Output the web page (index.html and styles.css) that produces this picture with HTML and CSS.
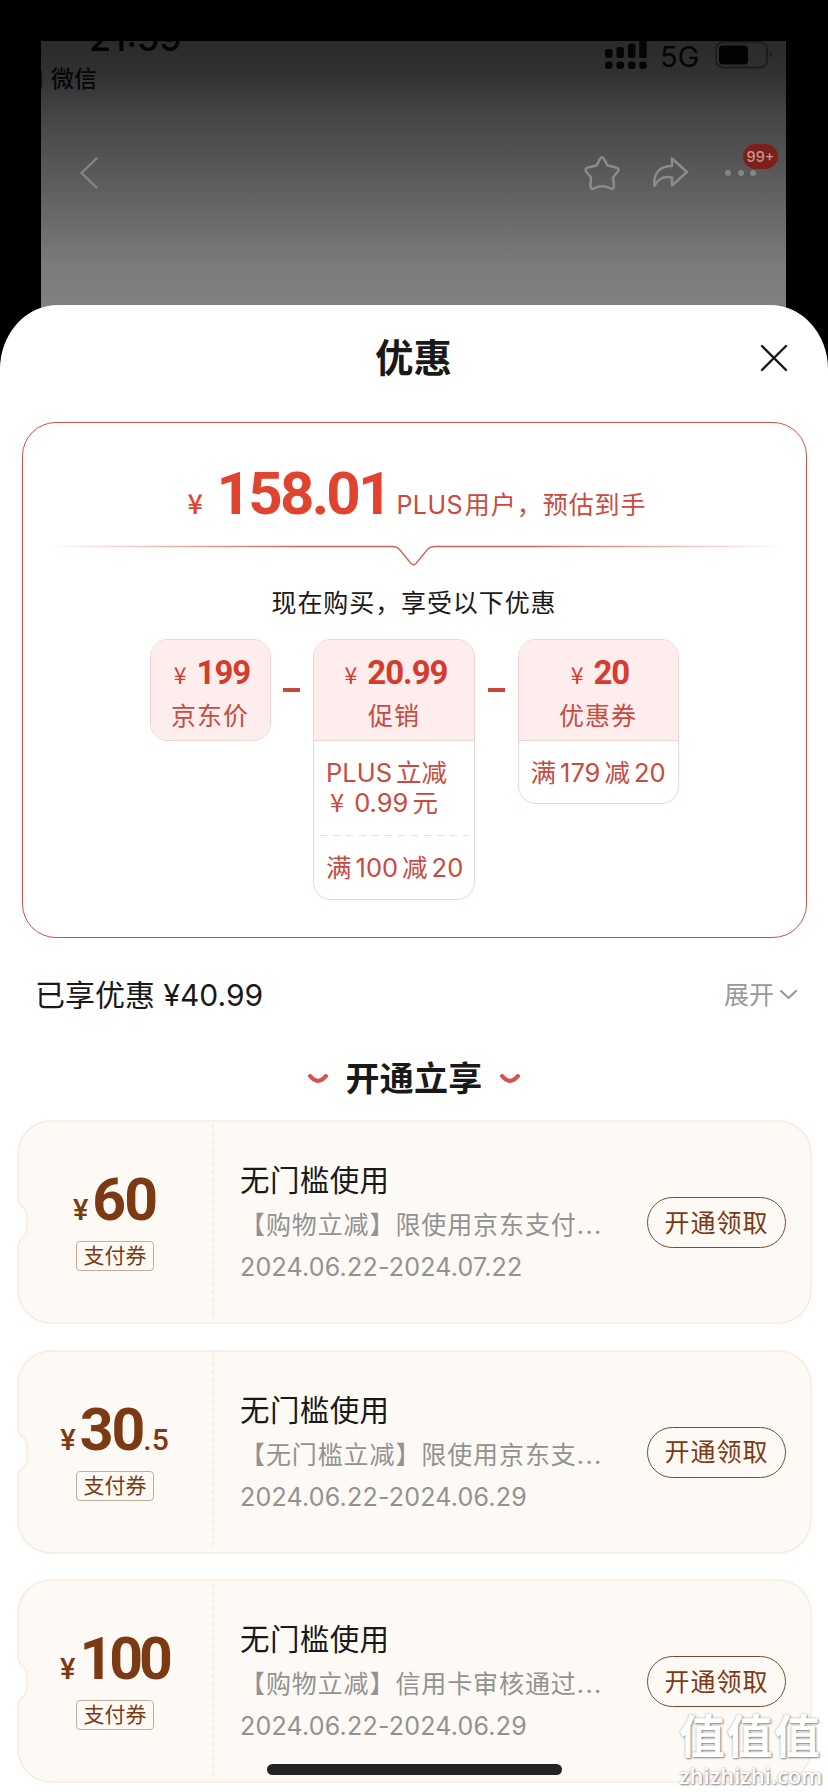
FILE: index.html
```html
<!DOCTYPE html>
<html lang="zh-CN">
<head>
<meta charset="utf-8">
<title>优惠</title>
<link rel="stylesheet" href="styles.css">
</head>
<body>
<svg class="defs" width="0" height="0" aria-hidden="true">
  <defs>
    <symbol id="ticket" viewBox="0 0 795 204">
      <path d="M34 1H761A33 33 0 0 1 794 34V170A33 33 0 0 1 761 203H34A33 33 0 0 1 1 170V126C1 117 10 120 10 108V97C10 85 1 88 1 79V34A33 33 0 0 1 34 1Z" fill="#fdfaf5" stroke="#f8ebe0" stroke-width="1.6"/>
      <path d="M196 5V200" stroke="#faecd6" stroke-width="1.6" stroke-dasharray="4 3.5"/>
    </symbol>
    <symbol id="smile" viewBox="0 0 20 10">
      <path d="M2.2 2.2Q10 11.500 17.800 2.200" fill="none" stroke="#d9504d" stroke-width="4.200" stroke-linecap="round"/>
    </symbol>
  </defs>
</svg>
<div class="phone">
  <header class="backdrop">
    <div class="screen">
      <div class="status">
        <span class="clock">21:59</span>
        <svg class="signal" width="42" height="28" viewBox="0 0 42 28">
          <g fill="#050505">
            <rect x="0" y="8" width="7.5" height="9" rx="2.5"/><rect x="11.5" y="6" width="7.5" height="11" rx="2.5"/><rect x="23" y="2.5" width="7.5" height="14.5" rx="2.5"/><rect x="34.200" y="-3" width="7.500" height="20" rx="1.500"/>
            <rect x="0" y="20.500" width="7.500" height="7.500" rx="3"/><rect x="11.500" y="20.500" width="7.500" height="7.500" rx="3"/><rect x="23" y="20.500" width="7.500" height="7.500" rx="3"/><rect x="34.200" y="20.500" width="7.500" height="7.500" rx="3"/>
          </g>
        </svg>
        <span class="net">5G</span>
        <svg class="battery" width="60" height="30" viewBox="0 0 60 30">
          <rect x="1" y="1" width="51" height="25.500" rx="7" fill="none" stroke="#1c1c1c" stroke-width="1.800"/>
          <rect x="4" y="4.500" width="29" height="19" rx="4" fill="#020202"/>
          <path d="M55 10Q58 13.500 55 17Z" fill="#151515"/>
        </svg>
      </div>
      <div class="back-app"><i></i><span>微信</span></div>
      <nav class="nav">
        <svg width="20" height="34" viewBox="0 0 20 34"><path d="M17.500 2.500L2.500 17L17.500 31.500" fill="none" stroke="#858585" stroke-width="2.400" stroke-linecap="round"/></svg>
        <svg class="star" width="36" height="36" viewBox="0 0 36 36"><path d="M16 4Q18 .5 20 4L23.500 10.500L32 12.500Q36 13.500 33.500 17L29 22.500L30 30.500Q30 35 26.500 33.500Q18 29 10 33.500Q6.500 35 6.500 30.500L7 22.500L2.500 17Q0 13.500 4 12.500L12.500 10.500Z" fill="none" stroke="#8b8b8b" stroke-width="2.500" stroke-linejoin="round"/></svg>
        <svg class="share" width="38" height="34" viewBox="0 0 38 34"><path d="M20 2.500L35 16L20 29.500V21.500Q8 19 2.500 30C1 18 7 10 20 10Z" fill="none" stroke="#8b8b8b" stroke-width="2.500" stroke-linejoin="round"/></svg>
        <div class="more"><i></i><i></i><i></i><b>99+</b></div>
      </nav>
    </div>
  </header>

  <main class="sheet">
    <div class="sheet-head">
      <h1>优惠</h1>
      <svg class="close" width="28" height="28" viewBox="0 0 28 28"><path d="M2 2L26 26M26 2L2 26" stroke="#161616" stroke-width="2.400" stroke-linecap="round"/></svg>
    </div>

    <section class="summary">
      <div class="total"><span class="yen">¥</span><strong>158.01</strong><span class="who">PLUS<em>用户，预估到手</em></span></div>
      <svg class="divider" width="740" height="24" viewBox="0 0 740 24">
        <defs><linearGradient id="fade" gradientUnits="userSpaceOnUse" x1="0" x2="740" y1="0" y2="0"><stop offset="0" stop-color="#cf6258" stop-opacity="0"/><stop offset=".35" stop-color="#cf6258"/><stop offset=".65" stop-color="#cf6258"/><stop offset="1" stop-color="#cf6258" stop-opacity="0"/></linearGradient></defs>
        <path d="M0 2.500H347Q352 2.500 355 6L366 19.500Q368.500 22 371 19.500L382 6Q385 2.500 390 2.500H740" fill="none" stroke="url(#fade)" stroke-width="1.300"/>
      </svg>
      <p class="hint">现在购买，享受以下优惠</p>
      <div class="formula">
        <div class="term base">
          <div class="term-head"><p class="num"><span>¥</span>199</p><p class="name">京东价</p></div>
        </div>
        <i class="minus"></i>
        <div class="term promo">
          <div class="term-head"><p class="num"><span>¥</span>20.99</p><p class="name">促销</p></div>
          <p class="rule two">PLUS<em>立减</em><br><span class="cut">¥</span>0.99<em>元</em></p>
          <p class="rule dashed">满<em>100</em>减<em>20</em></p>
        </div>
        <i class="minus"></i>
        <div class="term coupon-term">
          <div class="term-head"><p class="num"><span>¥</span>20</p><p class="name">优惠券</p></div>
          <p class="rule one">满<em>179</em>减<em>20</em></p>
        </div>
      </div>
    </section>

    <div class="enjoyed"><span>已享优惠 ¥40.99</span><span class="expand">展开<svg width="19" height="12" viewBox="0 0 19 12"><path d="M2 2L9.500 9L17 2" fill="none" stroke="#999" stroke-width="2.200" stroke-linecap="round" stroke-linejoin="round"/></svg></span></div>

    <h2 class="section-title"><svg width="20" height="10"><use href="#smile"/></svg><span>开通立享</span><svg width="20" height="10"><use href="#smile"/></svg></h2>

    <div class="tickets">
      <article class="ticket">
        <svg class="shape" width="795" height="204"><use href="#ticket"/></svg>
        <div class="worth"><p class="amount"><span>¥</span>60</p><span class="tag">支付券</span></div>
        <div class="detail"><h3>无门槛使用</h3><p class="desc">【购物立减】限使用京东支付<span>...</span></p><p class="date">2024.06.22-2024.07.22</p></div>
        <button class="get">开通领取</button>
      </article>
      <article class="ticket">
        <svg class="shape" width="795" height="204"><use href="#ticket"/></svg>
        <div class="worth"><p class="amount"><span>¥</span>30<small>.5</small></p><span class="tag">支付券</span></div>
        <div class="detail"><h3>无门槛使用</h3><p class="desc">【无门槛立减】限使用京东支<span>...</span></p><p class="date">2024.06.22-2024.06.29</p></div>
        <button class="get">开通领取</button>
      </article>
      <article class="ticket">
        <svg class="shape" width="795" height="204"><use href="#ticket"/></svg>
        <div class="worth"><p class="amount tight"><span>¥</span>100</p><span class="tag">支付券</span></div>
        <div class="detail"><h3>无门槛使用</h3><p class="desc">【购物立减】信用卡审核通过<span>...</span></p><p class="date">2024.06.22-2024.06.29</p></div>
        <button class="get">开通领取</button>
      </article>
    </div>
  </main>
  <div class="home-bar"></div>
  <div class="watermark"><b>值值值</b><span>zhizhizhi.com</span></div>
</div>
</body>
</html>
```
FILE: styles.css
```css
* { box-sizing: border-box; margin: 0; padding: 0; }
body { background: #000; font-family: Inter, "Noto Sans CJK SC", sans-serif; color: #191919; }
em, i { font-style: normal; }
svg { display: block; flex: none; }
.defs { position: absolute; }
.phone { position: relative; width: 828px; height: 1792px; overflow: hidden; background: #000; }

.backdrop { height: 305px; padding: 41px 42px 0 41px; }
.screen { height: 340px; overflow: hidden; background: linear-gradient(#2a2a2a 0, #303030 30px, #454545 75px, #5c5c5c 140px, #7b7b7b 225px, #808080 264px); }
.status { display: flex; height: 30px; align-items: flex-start; padding-left: 48px; }
.clock { width: 102px; flex: none; margin-top: -26px; font-size: 36px; font-weight: 500; line-height: 46px; color: #030303; white-space: nowrap; }
.signal { margin-left: 414px; }
.net { width: 54px; flex: none; margin-left: 13px; font-size: 29px; line-height: 31px; color: #050505; }
.battery { margin-left: 1px; }
.back-app { display: flex; align-items: center; height: 17px; gap: 9px; font-size: 23px; font-weight: 500; line-height: 17px; color: #060606; }
.back-app i { width: 1px; height: 17px; background: #111; }
.nav { display: flex; align-items: center; height: 40px; margin-top: 65px; padding-left: 38px; }
.nav .star { margin-left: 485px; }
.nav .share { margin-left: 32px; }
.more { position: relative; display: flex; gap: 6.500px; margin-left: 35px; }
.more i { width: 6px; height: 6px; border-radius: 3px; background: #7e8987; }
.more b { position: absolute; left: 18px; top: -26px; width: 35px; height: 25px; border-radius: 13px; background: #7c201c; color: #c79690; font-size: 14.500px; font-weight: 500; line-height: 26px; text-align: center; }

.sheet { position: relative; height: 1487px; border-radius: 58px 58px 0 0 / 64px 64px 0 0; background: #fff; }
.sheet-head { display: flex; align-items: center; height: 117px; padding: 0 40px 11px 375px; }
.sheet-head h1 { flex: 1; font-size: 38.500px; font-weight: 600; line-height: 50px; }

.summary { width: 785px; height: 516px; margin-left: 21.500px; border: 1px solid #c9544a; border-radius: 34px; color: #c94a3f; }
.total { display: flex; align-items: baseline; height: 74px; margin-top: 34px; padding-left: 165px; white-space: nowrap; }
.total .yen { width: 29px; font: 500 27px/60px "Noto Sans CJK SC", sans-serif; color: #e0432e; }
.total strong { width: 180px; font: 700 60px/74px Roboto, sans-serif; letter-spacing: -2.700px; color: #e0432e; }
.who { font-size: 25px; letter-spacing: .4px; }
.who em { margin-left: 2px; letter-spacing: .95px; }
.divider { margin: 13px 0 0 22px; }
.hint { height: 34px; margin-top: 18px; text-align: center; font-size: 25px; line-height: 34px; letter-spacing: .9px; color: #191919; }
.formula { display: flex; align-items: flex-start; margin-top: 19px; padding-left: 127px; }
.term { border: 1px solid #eed3d3; border-radius: 18px; overflow: hidden; white-space: nowrap; }
.base { width: 121px; }
.promo { width: 162px; height: 261px; }
.coupon-term { width: 161px; height: 165px; }
.term-head { height: 101px; padding-top: 14px; background: #fdeded; text-align: center; border-bottom: 1px solid #eed3d3; }
.base .term-head { height: 100px; border-bottom: 0; }
.num { height: 38px; padding-left: 4px; font: 700 33px/38px Roboto, sans-serif; letter-spacing: -1px; color: #d63c2d; }
.num span { margin-right: 11px; font: 400 23px/30px "Noto Sans CJK SC", sans-serif; }
.name { margin-top: 7px; font-size: 25px; line-height: 34px; letter-spacing: 1px; }
.minus { width: 17px; height: 4px; margin: 49px 13px 0 12.500px; background: #cb463b; }
.rule { font-size: 25.500px; line-height: 30px; }
.rule.two { height: 94px; padding: 17px 0 0 12px; }
.two em { margin-left: 4px; }
.cut { margin: 0 10px 0 4px; font-family: "Noto Sans CJK SC", sans-serif; line-height: 1; }
.rule.dashed { margin: 0 6px; padding: 18px 0 0 6px; background: repeating-linear-gradient(90deg, #e8dcdc 0 7px, transparent 7px 13px) 0 0 / 100% 1px no-repeat; }
.rule.one { padding: 17px 0 0 12px; }
.dashed em, .one em { margin: 0 4px; }

.enjoyed { display: flex; justify-content: space-between; align-items: center; height: 40px; margin: 37px 30px 0 35px; font-size: 30px; line-height: 40px; }
.expand { display: flex; align-items: center; gap: 5px; font-size: 25px; color: #999; }
.section-title { display: flex; justify-content: center; align-items: center; gap: 17px; height: 46px; margin-top: 41px; font-size: 34px; font-weight: 600; line-height: 46px; letter-spacing: .3px; }

.tickets { display: flex; flex-direction: column; gap: 25.500px; margin: 18px 0 0 17px; }
.ticket { position: relative; display: flex; width: 795px; height: 204px; }
.shape { position: absolute; left: 0; top: 0; }
.worth { position: relative; width: 223px; padding: 43px 28px 0 0; text-align: center; color: #7b3a14; }
.amount { height: 74px; font: 700 59px/74px Roboto, sans-serif; letter-spacing: -2px; }
.amount span { margin-right: 4px; font-size: 29px; font-weight: 500; letter-spacing: 0; }
.amount small { font-size: 30px; font-weight: 500; letter-spacing: 0; }
.amount.tight { letter-spacing: -4px; }
.tag { display: block; width: 78px; height: 30px; margin: 4px auto 0 59px; border: 1px solid #c5ad9d; border-radius: 4px; font-size: 21px; line-height: 28px; }
.detail { position: relative; width: 407px; padding-top: 40px; white-space: nowrap; }
.detail h3 { font-size: 29.500px; font-weight: 400; line-height: 40px; letter-spacing: .4px; }
.desc { margin-top: 7px; font-size: 25px; line-height: 36px; letter-spacing: .9px; color: #929292; }
.desc span { letter-spacing: 1.500px; }
.date { margin-top: 7px; font-size: 25px; line-height: 34px; letter-spacing: .2px; color: #929292; }
.get { position: relative; width: 139px; height: 51px; margin-top: 77px; border: 1.500px solid #7b4a2c; border-radius: 26px; background: transparent; color: #7b3a14; font: 400 25px/48px Inter, "Noto Sans CJK SC", sans-serif; letter-spacing: 1px; }

.home-bar { position: absolute; left: 267px; top: 1764px; width: 295px; height: 11px; border-radius: 6px; background: #232323; }
.watermark { position: absolute; left: 679px; top: 1709px; width: 149px; color: #fff; text-shadow: 1px 1px 2px #888, 0 0 2px #aaa; white-space: nowrap; }
.watermark b { display: block; font-size: 46px; font-weight: 700; line-height: 54px; letter-spacing: 1.500px; }
.watermark span { display: block; font-family: "Open Sans", sans-serif; font-size: 22px; font-weight: 600; line-height: 24px; }
```
